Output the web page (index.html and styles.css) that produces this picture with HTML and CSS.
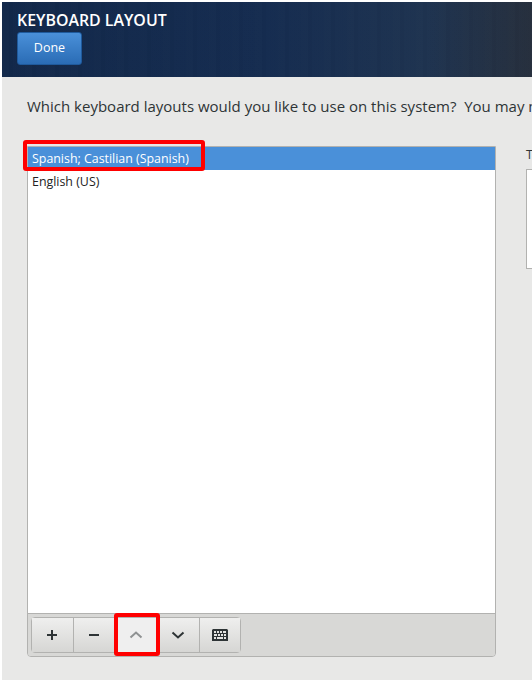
FILE: index.html
```html
<!DOCTYPE html>
<html lang="en">
<head>
  <meta charset="UTF-8" />
  <title>Keyboard Layout</title>
  <link rel="stylesheet" href="styles.css">
</head>
<body>
  <div class="screen">
    <div class="header">
      <h1>KEYBOARD LAYOUT</h1>
      <button class="btn-done">Done</button>
    </div>

    <div class="content">
      <p class="question">Which keyboard layouts would you like to use on this system?&nbsp; You may move any layout to the top of the list to select it as the default.</p>

      <div class="columns">
        <div class="layouts">
          <ul class="layout-list">
            <li class="selected"><span class="callout callout-row"></span>Spanish; Castilian (Spanish)</li>
            <li>English (US)</li>
          </ul>
          <div class="toolbar">
            <div class="btn-group">
              <button class="tool">
                <svg width="12" height="12" viewBox="0 0 12 12"><path d="M5 1h2v4h4v2H7v4H5V7H1V5h4z" fill="#2e3436"/></svg>
              </button>
              <button class="tool">
                <svg width="12" height="12" viewBox="0 0 12 12"><path d="M1 5h10v2H1z" fill="#2e3436"/></svg>
              </button>
              <button class="tool tool-off">
                <svg width="14" height="10" viewBox="0 0 14 10"><path d="M1.5 7.5 7 2.5l5.5 5" fill="none" stroke="#8f9293" stroke-width="2"/></svg>
              </button>
              <button class="tool">
                <svg width="14" height="10" viewBox="0 0 14 10"><path d="M1.5 2.5 7 7.5l5.5-5" fill="none" stroke="#2e3436" stroke-width="2"/></svg>
              </button>
              <button class="tool">
                <svg width="16" height="12" viewBox="0 0 16 12"><path d="M1 0h14l1 1v11H0V1z" fill="#2e3436"/><path d="M2 2h2v2H2zM5 2h2v2H5zM8 2h2v2H8zM11 2h3v2h-3zM2 5h3v2H2zM6 5h2v2H6zM9 5h2v2H9zM12 5h2v2h-2zM2 8h2v2H2zM5 8h6v2H5zM12 8h2v2h-2z" fill="#e4e4e2"/></svg>
              </button>
              <span class="callout callout-tool"></span>
            </div>
          </div>
        </div>

        <div class="test-side">
          <label>Test the layout configuration below:</label>
          <div class="test-box"></div>
        </div>
      </div>
    </div>
  </div>
</body>
</html>
```

FILE: styles.css
```css
html, body {
  margin: 0;
  height: 100%;
}

body {
  font-family: 'Open Sans', 'Liberation Sans', sans-serif;
  background-color: #fff;
  overflow: hidden;
}

.screen {
  width: 530px;
  height: 678px;
  margin: 2px 0 0 2px;
  background-color: #e8e8e7;
  overflow: hidden;
  position: relative;
}

.header {
  height: 75px;
  box-sizing: border-box;
  padding: 9px 15px 0;
  background:
    repeating-linear-gradient(90deg, rgba(255,255,255,0.006) 0 7px, rgba(0,0,0,0.012) 7px 11px, rgba(255,255,255,0.004) 11px 23px),
    linear-gradient(90deg, #12284a 0%, #152c50 50%, #1e3350 80%, #262f3d 100%);
}

.header h1 {
  margin: 0;
  font-size: 15.9px;
  line-height: 18px;
  font-weight: 600;
  color: #fff;
  white-space: nowrap;
}

.btn-done {
  display: block;
  width: 65px;
  height: 33px;
  margin-top: 3px;
  padding: 0 0 3px;
  font-family: inherit;
  font-size: 12.5px;
  color: #fff;
  background: linear-gradient(#4a90d9, #2a6cb5);
  border: 1px solid #1f5a9c;
  border-radius: 3px;
}

.content {
  padding: 19px 0 0 25px;
}

.question {
  margin: 0;
  font-size: 15px;
  line-height: 20px;
  color: #2e3436;
  white-space: nowrap;
}

.columns {
  display: flex;
  gap: 30px;
  margin-top: 30px;
}

.layouts {
  flex: none;
  width: 469px;
  height: 511px;
  box-sizing: border-box;
  display: flex;
  flex-direction: column;
  border: 1px solid #b2b2b0;
  border-radius: 0 0 4px 4px;
}

.layout-list {
  flex: 1;
  margin: 0;
  padding: 0;
  list-style: none;
  background-color: #fff;
  font-size: 12.4px;
  color: #222;
}

.layout-list li {
  position: relative;
  height: 23px;
  line-height: 23px;
  padding-left: 4px;
}

.layout-list .selected {
  background-color: #4a90d9;
  color: #fff;
}

.toolbar {
  height: 43px;
  box-sizing: border-box;
  padding: 3px;
  background-color: #d8d8d6;
  border-top: 1px solid #b2b2b0;
  border-radius: 0 0 3px 3px;
}

.btn-group {
  position: relative;
  display: flex;
  width: fit-content;
  height: 36px;
  box-sizing: border-box;
  border: 1px solid #b2b2b0;
  border-radius: 4px;
}

.tool {
  width: 42px;
  padding: 0 2px 0 0;
  display: flex;
  align-items: center;
  justify-content: center;
  background: linear-gradient(#efefee, #d6d6d4);
  border: none;
  border-right: 1px solid #b2b2b0;
}

.tool:last-of-type {
  width: 40px;
  padding: 0;
  border-right: none;
}

.tool-off {
  background: #efefef;
}

.callout {
  position: absolute;
  box-sizing: border-box;
  border: 4px solid #f00;
  border-radius: 3px;
}

.callout-row {
  left: -5px;
  top: -7px;
  width: 182px;
  height: 31px;
}

.callout-tool {
  left: 82px;
  top: -5px;
  width: 46px;
  height: 43px;
}

.test-side {
  flex: none;
  width: 300px;
  font-size: 12.4px;
  color: #2e3436;
}

.test-side label {
  display: block;
  height: 23px;
  line-height: 18px;
  white-space: nowrap;
}

.test-box {
  height: 98px;
  background-color: #fff;
  border: 1px solid #b2b2b0;
}
```
